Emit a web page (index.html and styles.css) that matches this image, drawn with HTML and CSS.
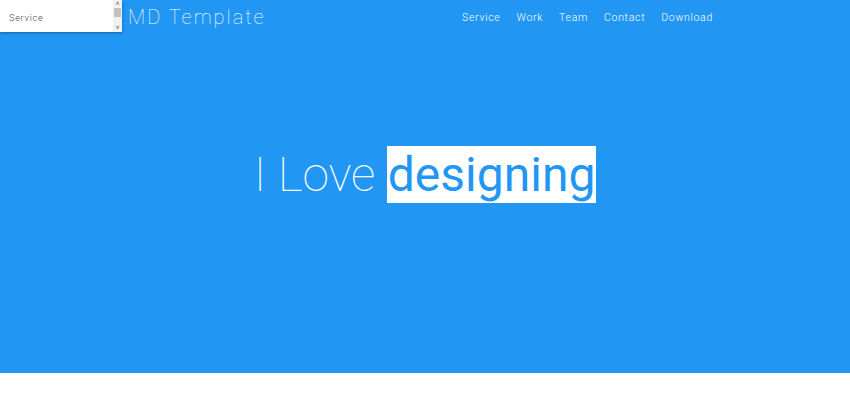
FILE: index.html
```html
<!DOCTYPE html>
<html>
<head>
<meta charset="utf-8">
<link rel="stylesheet" href="styles.css">
</head>
<body>
<header class="hero">
  <div class="topbar">
    <div class="picker">
      <span class="picker-label">Service</span>
      <div class="scroll">
        <span class="arrow">&#708;</span>
        <span class="thumb"></span>
        <span class="arrow">&#709;</span>
      </div>
    </div>
    <div class="brand">MD Template</div>
    <nav class="nav">
      <a href="#">Service</a>
      <a href="#">Work</a>
      <a href="#">Team</a>
      <a href="#">Contact</a>
      <a href="#">Download</a>
    </nav>
  </div>
  <div class="headline">
    <h1><span class="thin">I Love </span><span class="hl">designing</span></h1>
  </div>
</header>
</body>
</html>
```
FILE: styles.css
```css
html, body {
  margin: 0;
  padding: 0;
  background: #ffffff;
  font-family: Roboto, "Liberation Sans", sans-serif;
}
.hero {
  background: #2196f3;
  height: 373px;
  display: flex;
  flex-direction: column;
}
.topbar {
  display: flex;
  align-items: flex-start;
  height: 34px;
}
.picker {
  width: 122px;
  height: 32px;
  background: #fff;
  display: flex;
  box-shadow: 0 1px 3px rgba(0,0,0,0.35);
}
.picker-label {
  flex: 1;
  font-size: 9px;
  font-weight: 300;
  color: #444;
  letter-spacing: 0.8px;
  padding: 13px 0 0 9px;
}
.scroll {
  width: 9px;
  background: #f1f1f1;
  display: flex;
  flex-direction: column;
  align-items: center;
}
.arrow {
  font-size: 7px;
  color: #555;
  line-height: 8px;
  height: 8px;
}
.thumb {
  width: 7px;
  height: 9px;
  background: #c1c1c1;
  flex: 0 0 auto;
}
.scroll .arrow:last-child {
  margin-top: auto;
}
.brand {
  color: #fff;
  font-weight: 100;
  font-size: 20px;
  letter-spacing: 2px;
  margin-left: 6px;
  padding-top: 5px;
  line-height: 24px;
}
.nav {
  margin-left: auto;
  margin-right: 137px;
  display: flex;
  gap: 16px;
  padding-top: 11px;
}
.nav a {
  color: #fff;
  text-decoration: none;
  font-size: 10.5px;
  font-weight: 300;
  letter-spacing: 0.7px;
  line-height: 14px;
}
.headline {
  display: flex;
  justify-content: center;
  padding-top: 112px;
}
h1 {
  margin: 0;
  font-size: 48px;
  font-weight: 400;
  color: #fff;
  line-height: 58px;
}
.thin {
  font-weight: 100;
}
.hl {
  background: #fff;
  color: #2196f3;
  padding: 0 1px;
}
```
